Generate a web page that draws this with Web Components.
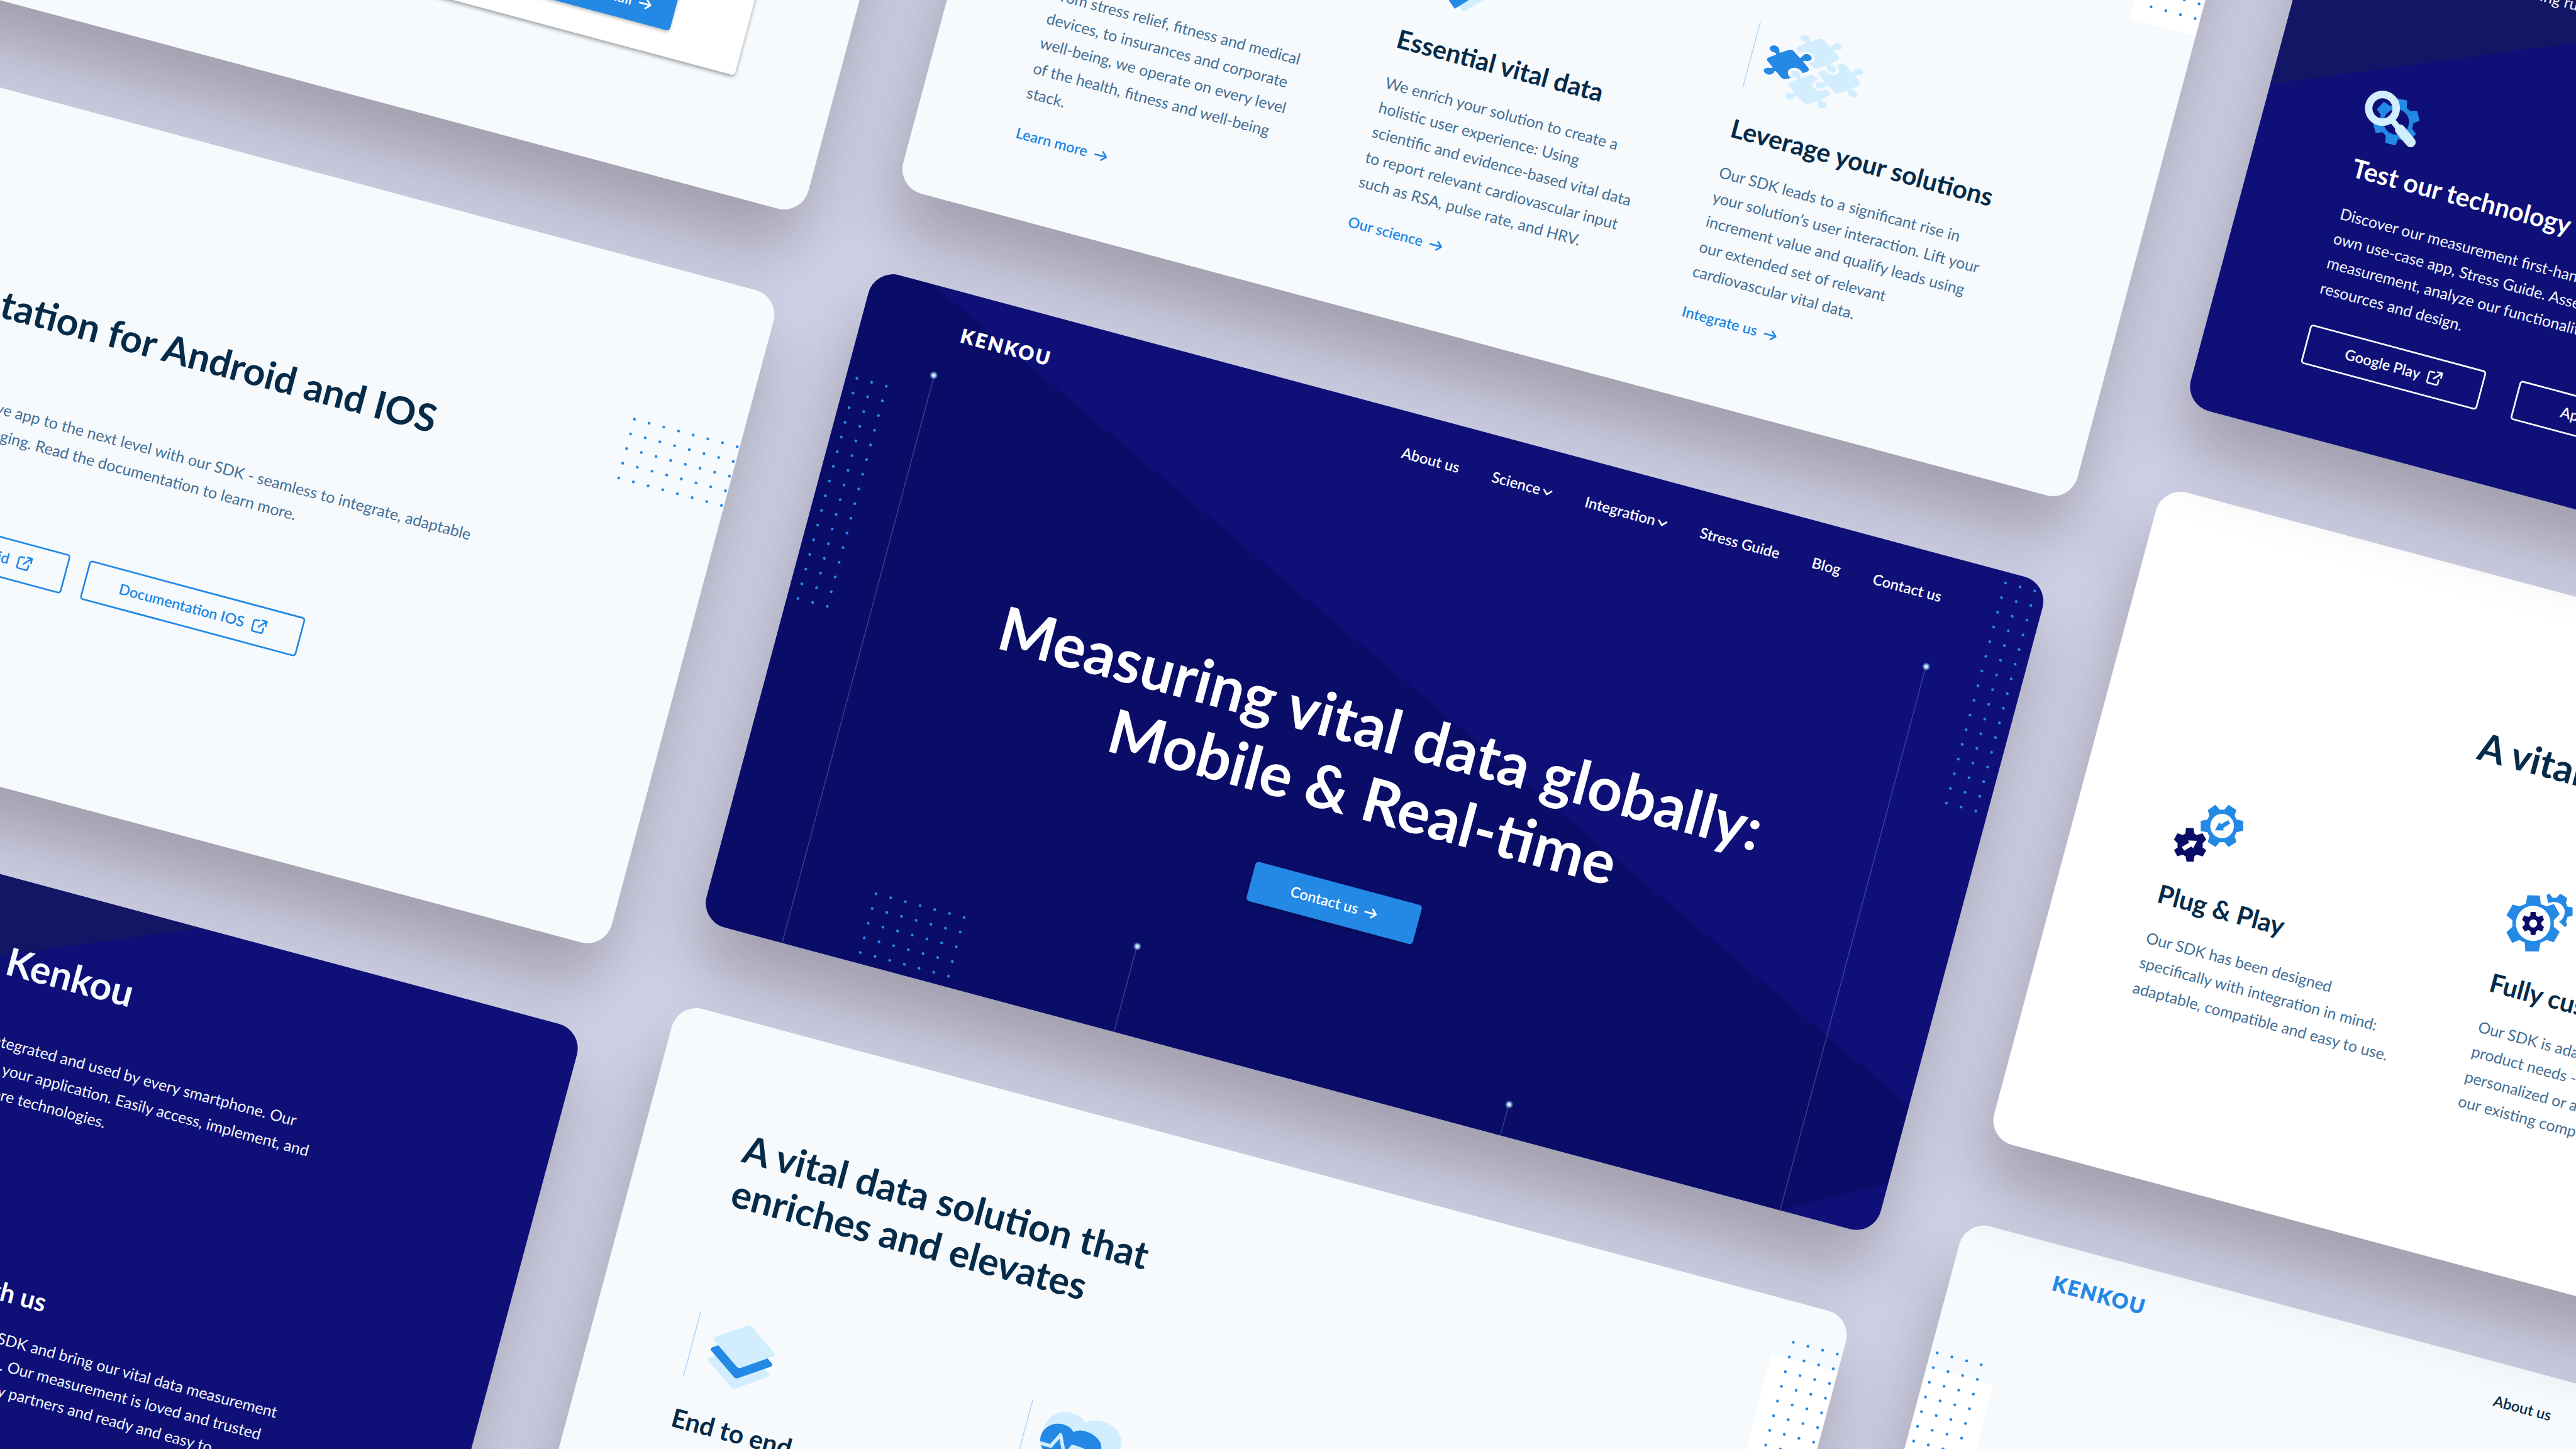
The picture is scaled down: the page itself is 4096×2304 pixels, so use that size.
<!DOCTYPE html>
<html lang="en">
<head>
<meta charset="utf-8">
<title>Kenkou</title>
<style>
html,body{margin:0;padding:0}
body{width:4096px;height:2304px;overflow:hidden;background:#d1d2e7;font-family:Lato,"Open Sans",sans-serif;color:#052b49}
</style>
</head>
<body>
<kk-board>
  <kk-column style="padding-top:206.67px">
    <kk-card tone="mist"><kk-mail-panel></kk-mail-panel></kk-card>
    <kk-card tone="mist"><kk-docs-page></kk-docs-page></kk-card>
    <kk-card tone="navy"><kk-partner-page></kk-partner-page></kk-card>
  </kk-column>
  <kk-column style="padding-top:145.7px">
    <kk-card tone="mist"><kk-solution-page></kk-solution-page></kk-card>
    <kk-card tone="navy"><kk-hero-page></kk-hero-page></kk-card>
    <kk-card tone="mist"><kk-solution-page></kk-solution-page></kk-card>
  </kk-column>
  <kk-column stacked>
    <kk-card tone="navy"><kk-partner-page></kk-partner-page></kk-card>
    <kk-card tone="white"><kk-plug-page></kk-plug-page></kk-card>
    <kk-card tone="mist"><kk-start-page></kk-start-page></kk-card>
  </kk-column>
</kk-board>
<script>
const define = (name, html, setup) => {
  const template = document.createElement('template');
  template.innerHTML = html;
  customElements.define(name, class extends HTMLElement {
    constructor() {
      super();
      this.attachShadow({ mode: 'open' }).append(template.content.cloneNode(true));
    }
    connectedCallback() { if (setup) setup(this, this.shadowRoot); }
  });
};

const type = `
  h1,h2,h3,p{margin:0;white-space:nowrap}
  h1{font-size:72px;line-height:84px;font-weight:700}
  h2{font-size:45.500px;line-height:54px;font-weight:700}
  h3{font-size:30.500px;line-height:34px;font-weight:700}
  p{font-size:18.500px;line-height:30.3px}
`;

/* ---------- small parts ---------- */
define('kk-arrow', `<style>:host{display:block;width:16px;height:14px}svg{display:block}</style>
<svg width="16" height="14" viewBox="0 0 16 14" fill="none" stroke="currentColor" stroke-width="2" stroke-linecap="round" stroke-linejoin="round"><path d="M1 7.5H14M9.3 2.5L14.4 7.5L9.3 12.5"/></svg>`);

define('kk-external', `<style>:host{display:block;width:18px;height:18px}svg{display:block}</style>
<svg width="18" height="18" viewBox="0 0 18 18" fill="none" stroke="currentColor" stroke-width="1.9" stroke-linecap="round" stroke-linejoin="round"><path d="M7.5 2.6H3.6Q1.5 2.6 1.5 4.7V14.2Q1.5 16.3 3.6 16.3H12.4Q14.5 16.3 14.5 14.2V10.2M11 1.3H16.6V7M16.3 1.6L8.2 9.8"/></svg>`);

define('kk-chevron', `<style>:host{display:block;width:12px;height:8px}svg{display:block}</style>
<svg width="12" height="8" viewBox="0 0 12 8" fill="none" stroke="currentColor" stroke-width="2" stroke-linecap="round" stroke-linejoin="round"><path d="M1.4 1.5L6 6.2L10.6 1.5"/></svg>`);

define('kk-dots', `<style>:host{display:block;line-height:0}svg{overflow:visible;fill:#2488e5}</style><svg></svg>`, (host, root) => {
  const cols = +host.getAttribute('cols'), rows = +host.getAttribute('rows');
  let circles = '';
  for (let r = 0; r < rows; r++) for (let c = 0; c < cols; c++)
    circles += `<circle cx="${c * 18}" cy="${r * 18}" r="1.7"/>`;
  const svg = root.querySelector('svg');
  svg.setAttribute('width', cols * 18);
  svg.setAttribute('height', rows * 18);
  svg.innerHTML = circles;
});

define('kk-logo', `<style>:host{display:block;font-size:22.8px;line-height:24px;font-weight:900;letter-spacing:2.3px;-webkit-text-stroke:.5px currentColor}</style><slot></slot>`);

define('kk-button', `<style>
:host{display:flex;align-items:center;justify-content:center;box-sizing:border-box;height:48px;gap:8px;font-size:17.450px;line-height:20px;font-weight:600;border-radius:4px;white-space:nowrap}
:host([kind=solid]){background:#2488e5;color:#fff;box-shadow:0 2px 4px rgba(0,0,0,.25)}
:host([kind=line]){border:2px solid currentColor;gap:9px}
</style><slot></slot>`);

define('kk-link', `<style>:host{display:flex;align-items:center;gap:8.500px;font-size:17.500px;line-height:20px;font-weight:600;color:#1f87e6}</style><slot></slot><kk-arrow></kk-arrow>`);

define('kk-nav', `<style>:host{display:flex;gap:40px;font-size:17.650px;line-height:20px;font-weight:600;white-space:nowrap}
span{display:flex;align-items:center;gap:3px}kk-chevron{margin-top:3px}</style>
<span>About us</span><span>Science<kk-chevron></kk-chevron></span><span>Integration<kk-chevron></kk-chevron></span><span>Stress Guide</span><span>Blog</span><span>Contact us</span>`);

define('kk-beam', `<style>:host{display:block;width:1px;background:rgba(190,215,255,.28);position:relative}
i{position:absolute;left:-4.5px;top:-5px;width:10px;height:10px;border-radius:50%;background:radial-gradient(circle,#cdeefb 0 22%,rgba(140,200,240,.75) 38%,rgba(120,170,230,0) 72%)}</style><i></i>`);

/* ---------- pictograms ---------- */
const glyphs = {
  layers: `<g><path transform="translate(60 53)" fill="#d2eefe" d="M-36.3-2.2L-2.6-25.2Q0-27 2.6-25.2L36.3-2.2Q39 0 36.3 2.2L2.6 25.2Q0 27 -2.6 25.2L-36.3 2.2Q-39 0 -36.3-2.2Z"/>
<path transform="translate(60 40.3)" fill="#2488e5" d="M-36.3-2.2L-2.6-25.2Q0-27 2.6-25.2L36.3-2.2Q39 0 36.3 2.2L2.6 25.2Q0 27 -2.6 25.2L-36.3 2.2Q-39 0 -36.3-2.2Z"/>
<path transform="translate(60 27.6)" fill="#d2eefe" d="M-36.3-2.2L-2.6-25.2Q0-27 2.6-25.2L36.3-2.2Q39 0 36.3 2.2L2.6 25.2Q0 27 -2.6 25.2L-36.3 2.2Q-39 0 -36.3-2.2Z"/></g>`,
  heart: `<g transform="rotate(-15) scale(.5298)"><path fill="#d2eefe" d="M83 178L28 115C5 82 28 27 70 26.5C95 27 112 40 117.5 52C128 43 150 44 165 52C197 65 206 98 188 116Z"/>
<path fill="#2488e5" d="M63 171L20 108C6 80 28 53 55 53C72 53 86 62 90 72C100 66 112 67 125 73C150 84 160 107 146 120Z"/>
<path fill="none" stroke="#d2eefe" stroke-width="8" stroke-linejoin="round" d="M15 96L39 103L61 78L70 125L88 104L112 112"/></g>`,
  puzzle: `<g transform="rotate(-15) scale(.5298) translate(-45.4 12) scale(.33333)"><path fill="#2488e5" d="M188 203L238 184Q243 180 238 175Q230 170 216 164C200 157 194 144 198 134C203 123 220 119 237 124C252 129 260 140 261 152Q261 162 261 167Q263 172 270 169L318 153C335 147 350 151 360 163L396 203Q402 209 408 202Q416 192 424 186C436 177 455 179 466 187C480 197 481 210 473 219C464 227 450 227 436 225Q424 223 420 229L455 273C460 281 460 290 452 296L418 309C412 295 395 275 365 272C340 271 320 284 318 300C317 318 325 328 339 338L312 347C298 350 284 347 274 338L240 297Q234 289 227 296Q224 305 214 312C204 320 185 320 172 312C158 304 153 292 158 283C163 273 178 271 192 272Q205 274 213 273Q218 270 213 264L180 224Q173 212 188 203Z"/>
<g fill="#d2eefe"><path d="M390 128L442 107Q447 103 442 100Q432 96 420 91C404 84 398 70 401 61C406 50 424 47 440 51C455 56 464 67 465 79Q464 90 466 94Q469 98 475 95L520 80C538 75 552 79 562 91L600 131Q605 135 610 129Q617 119 628 112C640 105 658 107 670 114C682 123 684 134 679 143C672 153 656 153 640 152Q628 151 624 156L656 196C664 206 664 216 654 222L606 243Q600 247 605 251Q615 254 625 260C640 270 645 284 639 294C632 306 614 307 598 300C584 293 578 282 578 270Q578 262 574 258L525 273C508 278 492 274 483 264L458 240C478 236 495 225 496 208C497 186 470 165 440 166C420 166 405 170 396 175L384 155C379 145 379 135 390 128Z"/>
<path d="M530 298L567 286C572 300 590 318 618 320C645 320 662 308 662 292C662 278 655 266 643 258L662 250C680 243 697 247 706 257L742 299Q748 304 753 298Q758 288 770 281C783 274 800 275 812 283C824 292 826 303 820 312C812 321 798 322 782 319Q768 317 765 321L800 367C806 376 805 384 797 390L750 409Q743 413 748 418Q757 421 768 427C782 436 786 450 781 460C774 471 756 474 740 467C726 460 720 449 720 437Q720 428 716 423L665 441C650 445 636 442 627 432L588 391Q583 385 576 390Q570 400 560 407C545 414 525 412 512 402C500 392 499 381 507 373C516 366 532 367 548 371Q560 373 566 369L526 318C521 308 522 302 530 298Z"/>
<path d="M330 370L380 350Q386 346 381 342Q368 338 358 332C342 324 335 311 341 300C348 288 366 287 382 294C397 301 404 313 402 326Q400 336 406 340L455 323C474 316 490 319 500 330L523 354C500 355 484 367 483 384C484 405 510 427 545 426C560 425 571 421 578 415L597 440C602 448 600 456 592 461L542 482Q534 486 540 490Q552 494 562 500C578 510 583 522 577 533C569 546 550 547 535 539C521 531 516 520 518 508Q518 500 513 496L465 512C448 518 432 515 422 505L378 463Q372 459 367 464Q360 474 348 482C335 489 318 486 308 477C298 467 298 455 306 447C316 439 332 439 347 443Q358 444 362 439L324 393C318 384 318 375 330 370Z"/></g></g>`,
  gears: `<g transform="rotate(-15) scale(.5298) translate(-45.2 3.6) scale(.58673 .33333)"><path fill="#2488e5" fill-rule="evenodd" d="M194 59L211 93Q219 89 227 93L244 59L274 94L267 133Q272 145 274 157L297 165Q300 166 300 170L300 230Q300 234 297 234L274 242Q272 256 267 268L274 308L244 342L227 308Q219 312 211 308L194 342L165 308L171 268Q166 256 164 242L140 236Q138 236 138 232L138 172Q138 168 140 167L164 157Q166 145 171 133L165 94ZM219.500 119A45 82 0 1 0 219.600 119Z"/><path fill="#2488e5" d="M243 161L250 185L224 214L225 231L192 230L208 177L216 189Z"/>
<path fill="#0a0d68" d="M82 215L110 215L114 252Q118 256 122 262L145 250L159 292L145 317Q146 330 145 345L159 363L146 405L122 393Q118 398 114 404L111 440L84 440L80 404Q75 400 70 393L49 404L36 363L50 345Q49 330 50 317L36 292L49 250L70 262Q75 256 79 252Z"/><path fill="#fff" d="M90 297L124 300L109 350L102 339L75 366L66 342L93 313Z"/></g>`,
  custom: `<g transform="rotate(-15) scale(.5298) translate(-787.8 -195.6) scale(.58673 .33333)"><path fill="#2488e5" fill-rule="evenodd" d="M1384 667L1431 669L1435 727Q1446 732 1457 741L1485 726L1507 793L1484 835Q1485 855 1484 877L1507 912L1484 982L1457 966Q1446 978 1434 984L1427 1043L1376 1043L1374 984Q1364 978 1354 966L1326 986L1304 915L1327 877Q1326 855 1327 835L1304 800L1328 729L1354 741Q1366 732 1378 725ZM1406 737A66 118 0 1 0 1406.100 737Z"/>
<path fill="#0a0d68" fill-rule="evenodd" d="M1396 778L1415 778L1417 804L1425 812L1441 802L1447 832L1437 848L1437 864L1447 880L1440 909L1425 900L1417 908L1414 933L1397 933L1395 908L1388 900L1373 909L1364 880L1374 864L1374 848L1364 832L1371 802L1388 812L1395 804ZM1406 829A15 27 0 1 0 1406.100 829Z"/>
<path fill="#2488e5" d="M1467 655L1481 684Q1489 682 1494 684L1509 656L1535 684L1531 722L1537 743L1554 748Q1556 749 1556 755L1556 804L1537 812L1531 842L1535 868L1527 881L1504 843C1520 832 1527 800 1526 770C1522 730 1500 697 1463 719L1457 666Z"/></g>`,
  search: `<g transform="rotate(-15) scale(.5298) translate(-54.9 54.5) scale(.33333)"><path fill="#2488e5" fill-rule="evenodd" d="M274 90L336 104Q339 105 338 109L335 153Q348 164 358 176L401 173Q404 173 405 176L421 237Q421 240 419 241L379 257Q377 275 370 292L396 328L348 385L276 362L262 402Q260 406 256 405L194 389Q191 388 191 385L194 340Q183 330 174 317L130 321Q126 321 125 318L110 262L157 220Q155 205 162 202L137 167Q134 163 137 160L178 117Q183 113 187 116L222 140L245 134ZM265 163A85 85 0 1 0 265.100 163Z"/>
<g fill="none" stroke="#d2eefe"><circle cx="172" cy="156.500" r="92.500" stroke-width="50"/><path stroke-width="40" d="M238 238L280 288"/><path stroke-width="68" stroke-linecap="round" d="M290 299L361 384"/></g></g>`
};
define('kk-glyph', `<style>:host{display:block;height:80px}:host([rule]) svg{border-left:1px solid #a6d1fa}svg{display:block;overflow:visible}</style><svg width="120" height="80"></svg>`,
  (host, root) => { root.querySelector('svg').innerHTML = glyphs[host.getAttribute('name')]; });

define('kk-feature', `<style>${type}
:host{display:flex;flex-direction:column;align-items:flex-start;width:409.500px}
:host(:first-child){width:407.300px}
h3{margin-top:32.700px;color:var(--head,#052b49)}
p{margin-top:var(--copy-gap,22.500px);color:var(--copy,#456f95)}
:host([close]) h3{margin-top:23.500px}
::slotted([slot=foot]){margin-top:24.800px}
</style><slot name="glyph"></slot><h3><slot name="title"></slot></h3><p><slot></slot></p><slot name="foot"></slot>`);

/* ---------- frames ---------- */
define('kk-board', `<style>:host{display:flex;gap:100px;width:4520px;align-items:flex-start;transform-origin:0 0;transform:rotate(15deg) scale(1.34222) translate(-456.45px,-1006.8px)}</style><slot></slot>`);
define('kk-column', `<style>:host{display:flex;flex-direction:column;gap:100px}
:host([stacked]) ::slotted(kk-card:nth-child(1)){z-index:3}
:host([stacked]) ::slotted(kk-card:nth-child(2)){z-index:2}</style><slot></slot>`);
define('kk-card', `<style>
:host{display:block;position:relative;width:1440px;height:800px}
:host::before{content:"";position:absolute;inset:0;z-index:-1;border-radius:30px;box-shadow:0 50px 80px rgba(18,4,0,.25)}
div{height:100%;border-radius:30px;overflow:hidden;display:flex}
:host([tone=mist]) div{background:#f6fafd}
:host([tone=white]) div{background:#fff}
:host([tone=navy]) div{background:#0e1078;color:#fff}
</style><div><slot></slot></div>`);

/* ---------- pages ---------- */
define('kk-mail-panel', `<style>:host{display:flex;width:100%;justify-content:flex-end;align-items:flex-start;padding:120px 120px 0 0;box-sizing:border-box}
div{display:flex;justify-content:flex-end;align-items:flex-end;box-sizing:border-box;width:590px;height:541px;padding:0 88px 31px 0;background:#fff;border-radius:4px;box-shadow:0 2px 5px rgba(0,0,0,.4)}
kk-button{width:204px;justify-content:flex-end;padding-right:28px}</style>
<div><kk-button kind="solid">Send email<kk-arrow></kk-arrow></kk-button></div>`);

define('kk-docs-page', `<style>${type}
:host{display:flex;flex-direction:column;position:relative;width:1440px;box-sizing:border-box;padding-top:219.500px}
h2{text-align:center;font-size:45.400px}
.copy{margin-top:78.500px;color:#456f95;text-align:right}
.copy p{line-height:31px;font-size:18.600px}
.copy p:first-child{width:1159px}.copy p:last-child{width:953px}
nav{display:flex;justify-content:flex-end;width:996px;gap:23.500px;margin-top:99.500px;color:#1f87e6}
kk-button{padding:0 40px}
kk-button:last-child{width:265px;padding:0}
kk-dots{position:absolute;left:1310.500px;top:185.400px}
</style><h2>Documentation for Android and IOS</h2>
<div class="copy"><p>native app to the next level with our SDK - seamless to integrate, adaptable</p><p>engaging. Read the documentation to learn more.</p></div>
<nav><kk-button kind="line">Documentation Android<kk-external></kk-external></kk-button><kk-button kind="line">Documentation IOS<kk-external></kk-external></kk-button></nav>
<kk-dots cols="8" rows="5"></kk-dots>`);

define('kk-partner-page', `<style>${type}
:host{display:flex;flex-direction:column;width:1440px;box-sizing:border-box;padding-top:69.500px;position:relative;--head:#fff;--copy:#f3f8fd;--copy-gap:25px}
.shade{position:absolute;left:0;top:0}
h2,.copy,.cols{position:relative}
h2{width:913.500px;text-align:right;color:#f5fafe}
.copy{margin-top:53px;text-align:right;color:#f3f8fd}
.copy p{line-height:30.400px}
.copy p:nth-child(1){width:1139px}.copy p:nth-child(2){display:flex;justify-content:space-between;margin-left:264px;width:898.500px}.copy p:nth-child(3){width:921.500px}
.cols{display:flex;padding-left:120px;margin-top:78.300px}
kk-feature:first-child{width:560px}
nav{display:flex;gap:41px;margin-top:30px}
nav kk-button{width:216px}
.next{display:flex;flex-direction:column;padding-top:113px}
.next h3{width:228.500px;text-align:right}
.next p{text-align:right;color:#f3f8fd}
.next p:nth-of-type(1){margin-top:23px;width:526.600px}.next p:nth-of-type(2){width:514.600px}.next p:nth-of-type(3){text-align:left;padding-left:190px}
</style>
<svg class="shade" width="1440" height="800"><path d="M0 0H971L0 407Z" fill="#131665"/></svg>
<h2>Kenkou</h2>
<div class="copy"><p>integrated and used by every smartphone. Our</p><p><span>using runs</span><span>your application. Easily access, implement, and</span></p><p>core technologies.</p></div>
<div class="cols">
<kk-feature><kk-glyph slot="glyph" name="search"></kk-glyph><span slot="title">Test our technology</span>Discover our measurement first-hand with our<br>own use-case app, Stress Guide. Assess the<br>measurement, analyze our functionalities,<br>resources and design.<nav slot="foot"><kk-button kind="line">Google Play<kk-external></kk-external></kk-button><kk-button kind="line">App Store<kk-external></kk-external></kk-button></nav></kk-feature>
<div class="next"><h3>with us</h3><p>SDK and bring our vital data measurement</p><p>. Our measurement is loved and trusted</p><p>by partners and ready and easy to</p></div>
</div>`);

define('kk-solution-page', `<style>${type}
:host{display:flex;flex-direction:column;position:relative;width:1440px;box-sizing:border-box;padding:119.600px 0 0 120px}
.cols{display:flex;margin-top:118.400px}
.patch{position:absolute;left:1358.500px;top:67px;width:81.500px;height:162px;background:#fff}
kk-dots{position:absolute;left:1380.200px;top:47.800px}
</style>
<i class="patch"></i><kk-dots cols="4" rows="10"></kk-dots>
<h2>A vital data solution that<br>enriches and elevates</h2>
<div class="cols">
<kk-feature><kk-glyph slot="glyph" name="layers" rule></kk-glyph><span slot="title">End to end</span>From stress relief, fitness and medical<br>devices, to insurances and corporate<br>well-being, we operate on every level<br>of the health, fitness and well-being<br>stack.<kk-link slot="foot">Learn more</kk-link></kk-feature>
<kk-feature><kk-glyph slot="glyph" name="heart" rule></kk-glyph><span slot="title">Essential vital data</span>We enrich your solution to create a<br>holistic user experience: Using<br>scientific and evidence-based vital data<br>to report relevant cardiovascular input<br>such as RSA, pulse rate, and HRV.<kk-link slot="foot">Our science</kk-link></kk-feature>
<kk-feature><kk-glyph slot="glyph" name="puzzle" rule></kk-glyph><span slot="title">Leverage your solutions</span>Our SDK leads to a significant rise in<br>your solution’s user interaction. Lift your<br>increment value and qualify leads using<br>our extended set of relevant<br>cardiovascular vital data.<kk-link slot="foot">Integrate us</kk-link></kk-feature>
</div>`);

define('kk-plug-page', `<style>${type}
:host{display:flex;flex-direction:column;width:1440px;box-sizing:border-box;padding:171.800px 0 0 120px}
h2{padding-left:322px}
.cols{display:flex;margin-top:120.200px}
</style>
<h2>A vital data</h2>
<div class="cols">
<kk-feature close><kk-glyph slot="glyph" name="gears"></kk-glyph><span slot="title">Plug &amp; Play</span>Our SDK has been designed<br>specifically with integration in mind:<br>adaptable, compatible and easy to use.</kk-feature>
<kk-feature close><kk-glyph slot="glyph" name="custom"></kk-glyph><span slot="title">Fully customizable</span>Our SDK is adaptable<br>product needs - be it<br>personalized or as<br>our existing components</kk-feature>
</div>`);

define('kk-start-page', `<style>:host{display:flex;flex-direction:column;position:relative;width:1440px;box-sizing:border-box;padding:33px 119px 0 119px}
header{display:flex;justify-content:space-between;align-items:center}
kk-logo{color:#2488e5;font-size:24.300px;letter-spacing:1.700px}
.patch{position:absolute;left:0;top:180px;width:81.500px;height:162px;background:#fff}
kk-dots{position:absolute;left:8.400px;top:161px}</style>
<i class="patch"></i><kk-dots cols="4" rows="10"></kk-dots>
<header><kk-logo>KENKOU</kk-logo><kk-nav></kk-nav></header>`);

define('kk-hero-page', `<style>${type}
:host{display:flex;flex-direction:column;align-items:center;position:relative;width:1440px}
.shade{position:absolute;left:0;top:0}
header{display:flex;justify-content:space-between;align-items:center;position:relative;width:1202px;padding-top:37px}
h1{position:relative;text-align:center;margin-top:266.500px}
kk-button{position:relative;width:204px;margin-top:66px}
kk-dots,kk-beam{position:absolute}
</style>
<svg class="shade" width="1440" height="800"><path d="M0 0H70.500L1440 640V735L1325 800H0Z" fill="#0a0d68"/></svg>
<kk-beam style="left:99.500px;top:104.300px;height:696px"></kk-beam>
<kk-beam style="left:507.200px;top:695.500px;height:105px"></kk-beam>
<kk-beam style="left:981.200px;top:762.700px;height:38px"></kk-beam>
<kk-beam style="left:1324.200px;top:133.300px;height:667px"></kk-beam>
<kk-dots cols="3" rows="16" style="left:12.500px;top:131.800px"></kk-dots>
<kk-dots cols="3" rows="16" style="left:1390.400px;top:13.700px"></kk-dots>
<kk-dots cols="7" rows="5" style="left:192.500px;top:715.700px"></kk-dots>
<header><kk-logo>KENKOU</kk-logo><kk-nav></kk-nav></header>
<h1>Measuring vital data globally:<br>Mobile &amp; Real-time</h1>
<kk-button kind="solid">Contact us<kk-arrow></kk-arrow></kk-button>`);
</script>
</body>
</html>
